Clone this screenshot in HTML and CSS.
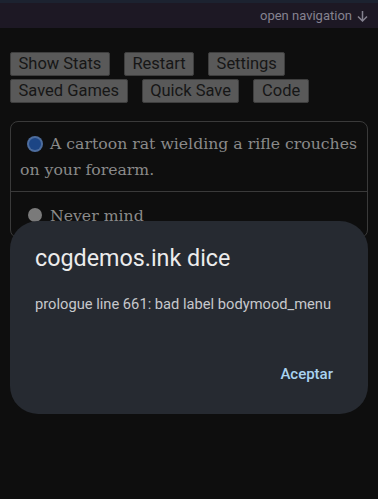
FILE: index.html
```html
<!DOCTYPE html>
<html>
<head>
    <title>cogdemos.ink</title>
    <link rel="stylesheet" href="styles.css">
</head>
<body>
    <div class="topline"></div>
    <div class="navbar">
        <span class="nav-link">open navigation
            <svg class="nav-arrow" width="11" height="12" viewBox="0 0 11 12">
                <path d="M5.5 1 V11 M1 6.5 L5.5 11 L10 6.5" fill="none" stroke="#858290" stroke-width="1.5"/>
            </svg>
        </span>
    </div>

    <div class="buttons">
        <button class="btn">Show Stats</button>
        <button class="btn">Restart</button>
        <button class="btn">Settings</button>
        <button class="btn">Saved Games</button>
        <button class="btn">Quick Save</button>
        <button class="btn">Code</button>
    </div>

    <form class="choices">
        <label class="choice">
            <span class="radio checked"></span>A cartoon rat wielding a rifle crouches on your forearm.
        </label>
        <label class="choice">
            <span class="radio"></span>Never mind
        </label>
    </form>

    <div class="dialog">
        <div class="dialog-title">cogdemos.ink dice</div>
        <div class="dialog-text">prologue line 661: bad label bodymood_menu</div>
        <div class="dialog-actions">
            <span class="dialog-btn">Aceptar</span>
        </div>
    </div>
</body>
</html>
```

FILE: styles.css
```css
body {
    margin: 0;
    padding: 0;
    background: #0e0e0e;
    font-family: 'Roboto', sans-serif;
    height: 499px;
    overflow: hidden;
}

.topline {
    height: 3px;
    background: #1c2230;
}

.navbar {
    height: 25px;
    background: #1d1824;
    display: flex;
    justify-content: flex-end;
    align-items: center;
    padding-right: 10px;
}

.nav-link {
    color: #858290;
    font-size: 13px;
    display: flex;
    align-items: center;
    gap: 5px;
}

.buttons {
    display: flex;
    flex-wrap: wrap;
    column-gap: 14px;
    row-gap: 3px;
    padding: 24px 10px 0 10px;
}

.btn {
    font-family: 'Roboto', sans-serif;
    font-size: 16.5px;
    color: #161616;
    background: #595959;
    border: 1px solid #3e3e3e;
    border-radius: 2px;
    height: 24px;
    padding: 0 7.5px;
    margin: 0;
    line-height: 22px;
}

.choices {
    margin: 18px 10px 0 10px;
    border: 1px solid #3a3a3a;
    border-radius: 8px;
}

.choice {
    display: block;
    font-family: 'DejaVu Serif', serif;
    font-size: 15.7px;
    line-height: 26px;
    color: #8a8a8a;
    padding: 9px 8px 8px 9px;
}

.choice + .choice {
    border-top: 1px solid #3a3a3a;
    padding-top: 11px;
}

.radio {
    display: inline-block;
    width: 14px;
    height: 14px;
    border-radius: 50%;
    background: #7a7a7a;
    margin: 0 8px 0 8px;
    vertical-align: -1px;
}

.radio.checked {
    background: #1c4585;
    box-shadow: 0 0 0 2px #4d6d9e;
    width: 12px;
    height: 12px;
    margin: 0 9px 0 9px;
}

.dialog {
    position: fixed;
    left: 10px;
    right: 10px;
    top: 221px;
    height: 193px;
    box-sizing: border-box;
    background: #262a31;
    border-radius: 28px;
    padding: 22px 25px 0 25px;
}

.dialog-title {
    font-family: 'Roboto', sans-serif;
    font-size: 23.3px;
    color: #ececec;
    line-height: 30px;
}

.dialog-text {
    font-size: 14.7px;
    color: #c6c8cc;
    margin-top: 22px;
}

.dialog-actions {
    display: flex;
    justify-content: flex-end;
    margin-top: 52px;
    padding-right: 10px;
}

.dialog-btn {
    font-size: 15px;
    font-weight: 500;
    color: #a9d3f0;
}
```
